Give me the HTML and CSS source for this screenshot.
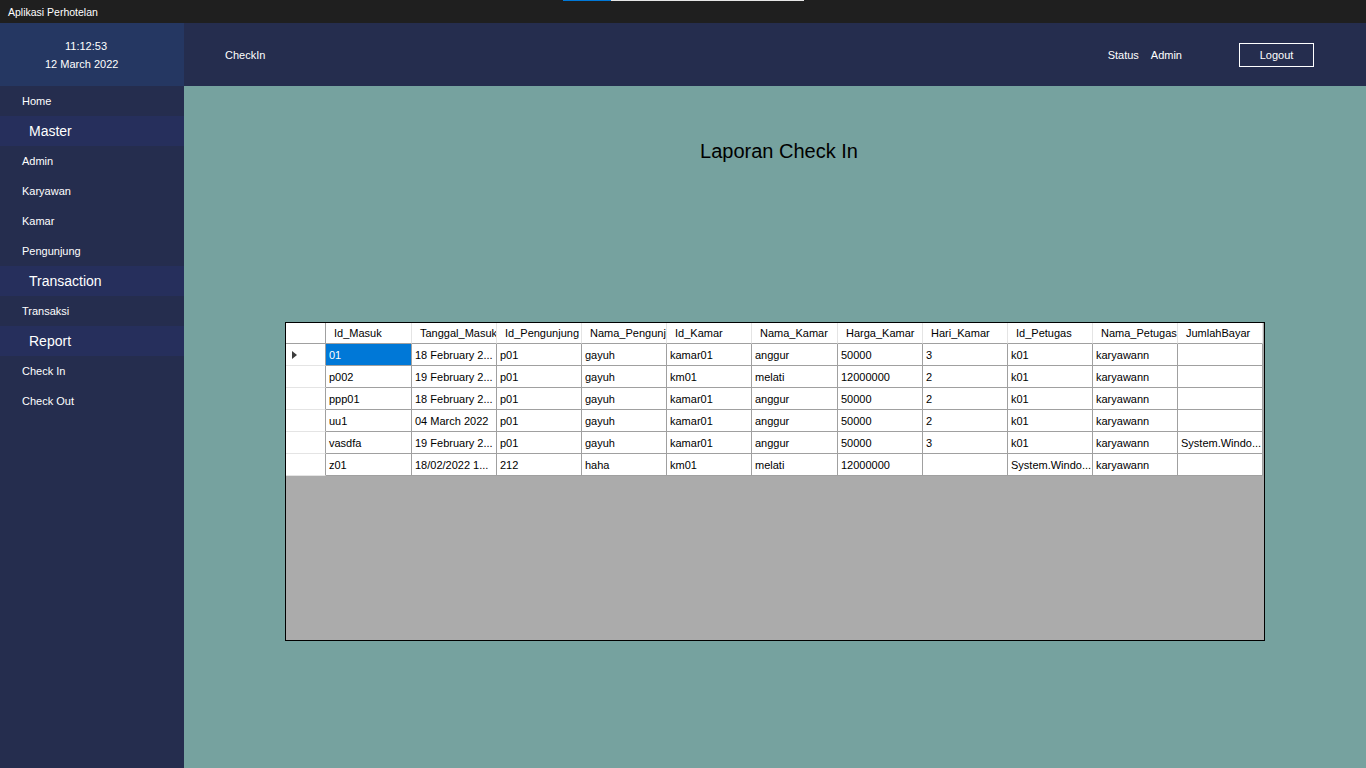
FILE: index.html
```html
<!DOCTYPE html>
<html>
<head>
<meta charset="utf-8">
<title>Aplikasi Perhotelan</title>
<link rel="stylesheet" href="styles.css">
</head>
<body>
<div class="titlebar">
  <span class="app-title">Aplikasi Perhotelan</span>
  <div class="capture-bar"><span class="capture-done"></span><span class="capture-rest"></span></div>
</div>
<div class="app">
  <div class="clock">
    <div class="time">11:12:53</div>
    <div class="date">12 March 2022</div>
  </div>
  <header class="topbar">
    <div class="page-name">CheckIn</div>
    <div class="user">
      <span class="status">Status</span>
      <span class="user-name">Admin</span>
      <button class="logout">Logout</button>
    </div>
  </header>
  <nav class="sidebar">
    <div class="item">Home</div>
    <div class="section">Master</div>
    <div class="item">Admin</div>
    <div class="item">Karyawan</div>
    <div class="item">Kamar</div>
    <div class="item">Pengunjung</div>
    <div class="section">Transaction</div>
    <div class="item">Transaksi</div>
    <div class="section">Report</div>
    <div class="item">Check In</div>
    <div class="item">Check Out</div>
  </nav>
  <main class="content">
    <h1 class="report-title">Laporan Check In</h1>
    <div class="datagrid">
      <div class="row head">
        <div class="rh"></div>
        <div class="hc">Id_Masuk</div>
        <div class="hc">Tanggal_Masuk</div>
        <div class="hc">Id_Pengunjung</div>
        <div class="hc">Nama_Pengunjung</div>
        <div class="hc">Id_Kamar</div>
        <div class="hc">Nama_Kamar</div>
        <div class="hc">Harga_Kamar</div>
        <div class="hc">Hari_Kamar</div>
        <div class="hc">Id_Petugas</div>
        <div class="hc">Nama_Petugas</div>
        <div class="hc">JumlahBayar</div>
      </div>
      <div class="row">
        <div class="rh"><span class="arrow"></span></div>
        <div class="c sel">01</div><div class="c">18 February 2...</div><div class="c">p01</div><div class="c">gayuh</div><div class="c">kamar01</div><div class="c">anggur</div><div class="c">50000</div><div class="c">3</div><div class="c">k01</div><div class="c">karyawann</div><div class="c"></div>
      </div>
      <div class="row">
        <div class="rh"></div>
        <div class="c">p002</div><div class="c">19 February 2...</div><div class="c">p01</div><div class="c">gayuh</div><div class="c">km01</div><div class="c">melati</div><div class="c">12000000</div><div class="c">2</div><div class="c">k01</div><div class="c">karyawann</div><div class="c"></div>
      </div>
      <div class="row">
        <div class="rh"></div>
        <div class="c">ppp01</div><div class="c">18 February 2...</div><div class="c">p01</div><div class="c">gayuh</div><div class="c">kamar01</div><div class="c">anggur</div><div class="c">50000</div><div class="c">2</div><div class="c">k01</div><div class="c">karyawann</div><div class="c"></div>
      </div>
      <div class="row">
        <div class="rh"></div>
        <div class="c">uu1</div><div class="c">04 March 2022</div><div class="c">p01</div><div class="c">gayuh</div><div class="c">kamar01</div><div class="c">anggur</div><div class="c">50000</div><div class="c">2</div><div class="c">k01</div><div class="c">karyawann</div><div class="c"></div>
      </div>
      <div class="row">
        <div class="rh"></div>
        <div class="c">vasdfa</div><div class="c">19 February 2...</div><div class="c">p01</div><div class="c">gayuh</div><div class="c">kamar01</div><div class="c">anggur</div><div class="c">50000</div><div class="c">3</div><div class="c">k01</div><div class="c">karyawann</div><div class="c">System.Windo...</div>
      </div>
      <div class="row">
        <div class="rh"></div>
        <div class="c">z01</div><div class="c">18/02/2022 1...</div><div class="c">212</div><div class="c">haha</div><div class="c">km01</div><div class="c">melati</div><div class="c">12000000</div><div class="c"></div><div class="c">System.Windo...</div><div class="c">karyawann</div><div class="c"></div>
      </div>
    </div>
  </main>
</div>
</body>
</html>
```
FILE: styles.css
```css
* { box-sizing: border-box; }
html, body { margin: 0; padding: 0; }
body {
  width: 1366px;
  height: 768px;
  overflow: hidden;
  font-family: "Liberation Sans", Arial, sans-serif;
  font-size: 11px;
  background: #76a29f;
}
.titlebar {
  position: relative;
  height: 23px;
  background: #1f1f1f;
  color: #ffffff;
  display: flex;
  align-items: center;
  padding-left: 8px;
  font-size: 10.5px;
}
.capture-bar {
  position: absolute;
  left: 563px;
  top: 0;
  height: 1px;
  display: flex;
}
.capture-done { width: 48px; background: #0078d7; }
.capture-rest { width: 193px; background: #e6e6e6; }

.app {
  display: grid;
  grid-template-columns: 184px 1fr;
  grid-template-rows: 63px 682px;
}
.clock {
  background: #253762;
  color: #ffffff;
  padding-top: 14px;
  line-height: 18px;
}
.time { padding-left: 65px; }
.date { padding-left: 45px; }
.topbar {
  background: #252d4e;
  color: #ffffff;
  display: flex;
  align-items: center;
  justify-content: space-between;
  padding-left: 41px;
  padding-right: 52px;
}
.user { display: flex; align-items: center; }
.status { margin-right: 12px; }
.user-name { margin-right: 57px; }
.logout {
  width: 75px;
  height: 24px;
  background: transparent;
  border: 1px solid #ffffff;
  color: #ffffff;
  font-family: inherit;
  font-size: 11px;
  padding: 0;
}
.sidebar {
  background: #252d4e;
  color: #ffffff;
}
.item {
  height: 30px;
  line-height: 30px;
  padding-left: 22px;
}
.section {
  height: 30px;
  line-height: 30px;
  padding-left: 29px;
  background: #262f5c;
  font-size: 14px;
}
.content {
  background: #76a29f;
  padding-top: 53px;
}
.report-title {
  margin: 0;
  padding-left: 8px;
  height: 24px;
  line-height: 24px;
  text-align: center;
  font-size: 20px;
  font-weight: normal;
  color: #000000;
}
.datagrid {
  margin-top: 159px;
  margin-left: 101px;
  width: 980px;
  height: 319px;
  border: 1px solid #000000;
  background: #ababab;
}
.row {
  display: grid;
  grid-template-columns: 40px 86px 85px 85px 85px 85px 86px 85px 85px 85px 85px 85px;
  height: 22px;
  background: #ffffff;
  width: 977px;
}
.row.head { height: 21px; }
.rh {
  border-right: 1px solid #a0a0a0;
  border-bottom: 1px solid #e4e4e4;
  display: flex;
  align-items: center;
  padding-left: 6px;
}
.head .rh { border-bottom: 1px solid #a0a0a0; }
.arrow {
  width: 0;
  height: 0;
  border-left: 5px solid #3c3c3c;
  border-top: 4.5px solid transparent;
  border-bottom: 4.5px solid transparent;
}
.hc {
  border-right: 1px solid #e4e4e4;
  border-bottom: 1px solid #a0a0a0;
  padding-left: 8px;
  padding-top: 1px;
  white-space: nowrap;
  overflow: hidden;
  line-height: 19px;
  color: #000000;
}
.c {
  border-right: 1px solid #a0a0a0;
  border-bottom: 1px solid #a0a0a0;
  padding-left: 3px;
  padding-top: 1px;
  white-space: nowrap;
  overflow: hidden;
  line-height: 20px;
  color: #000000;
}
.c.sel {
  background: #0078d7;
  color: #ffffff;
}
```
